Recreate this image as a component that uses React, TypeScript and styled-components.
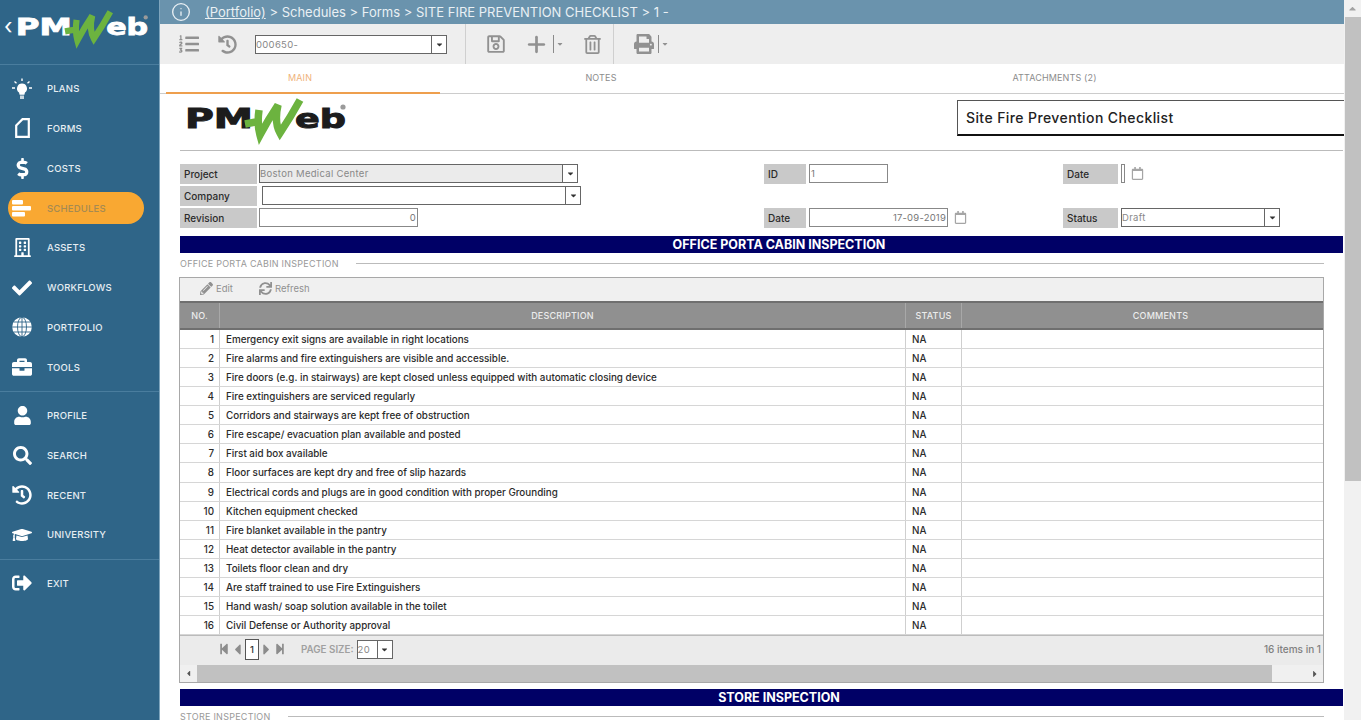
import React from "react";
import styled, { createGlobalStyle } from "styled-components";
import {
  FaBriefcase,
  FaCaretDown,
  FaCaretLeft,
  FaCaretRight,
  FaCaretUp,
  FaCheck,
  FaDollarSign,
  FaGraduationCap,
  FaHistory,
  FaListOl,
  FaPencilAlt,
  FaPrint,
  FaRegBuilding,
  FaRegCalendar,
  FaRegSave,
  FaRegTrashAlt,
  FaSearch,
  FaSignOutAlt,
  FaStepBackward,
  FaStepForward,
  FaSync,
  FaUser,
} from "react-icons/fa";
import { Info as InfoIcon, Plus } from "lucide-react";

const GlobalStyle = createGlobalStyle`
  html, body {
    margin: 0;
    height: 720px;
    overflow: hidden;
    background: #ffffff;
    font-family: "Inter", "Liberation Sans", sans-serif;
  }
  * {
    box-sizing: border-box;
  }
`;

function Logo({ width, ink }: { width: number; ink: string }) {
  return (
    <svg width={width} height={(width * 40) / 164} viewBox="0 0 164 40" overflow="visible">
      <g fontFamily="DejaVu Sans" fontWeight="700" fontSize="27" fill={ink} stroke={ink} strokeWidth="1">
        <text x="2" y="30" textLength="68" lengthAdjust="spacingAndGlyphs">
          PM
        </text>
        <text x="112" y="30" textLength="51" lengthAdjust="spacingAndGlyphs">
          eb
        </text>
      </g>
      <path
        d="M62 26 L73 24 M76 12 Q74 26 77 37 Q85 22 95 7 Q91 24 97 35 Q107 20 117 2"
        fill="none"
        stroke="#6cb33f"
        strokeWidth="7.5"
      />
      <circle cx="160" cy="9" r="2.6" fill="#9a9a9a" />
    </svg>
  );
}

function BulbIcon() {
  return (
    <svg width="22" height="22" viewBox="0 0 22 22" fill="#fff">
      <path d="M11 5.5a5 5 0 0 1 3 9l-.6 2.2H8.6L8 14.500a5 5 0 0 1 3-9z" />
      <rect x="9" y="17.500" width="4" height="3.500" fill="#c8d6df" />
      <path
        d="M11 .5v2.500M3.500 3.500l2 1.800M18.500 3.500l-2 1.800M1 10h3M18 10h3"
        stroke="#fff"
        strokeWidth="1.400"
      />
    </svg>
  );
}

function FormIcon() {
  return (
    <svg width="15" height="20" viewBox="0 0 15 20">
      <path d="M1.200 7.500 L7.500 1.200 H13.800 V18.800 H1.200 Z" fill="none" stroke="#fff" strokeWidth="2.200" />
    </svg>
  );
}

function BarsIcon() {
  return (
    <svg width="20" height="20" viewBox="0 0 20 20" fill="#fff">
      <rect x="0" y="2" width="11" height="4.500" rx="1" />
      <rect x="0" y="8" width="19" height="4.500" rx="1" />
      <rect x="0" y="14" width="13" height="4.500" rx="1" />
    </svg>
  );
}

function GlobeIcon() {
  return (
    <svg width="20" height="20" viewBox="0 0 20 20">
      <circle cx="10" cy="10" r="9.800" fill="#fff" />
      <g fill="none" stroke="#2f6588" strokeWidth="0.900">
        <ellipse cx="10" cy="10" rx="4.500" ry="9.800" />
        <path d="M10 0v20M0 10h20M1.500 5h17M1.500 15h17" />
      </g>
    </svg>
  );
}

const navTop = [
  { label: "PLANS", icon: <BulbIcon /> },
  { label: "FORMS", icon: <FormIcon /> },
  { label: "COSTS", icon: <FaDollarSign size={21} /> },
  { label: "SCHEDULES", icon: <BarsIcon />, active: true },
  { label: "ASSETS", icon: <FaRegBuilding size={19} /> },
  { label: "WORKFLOWS", icon: <FaCheck size={20} /> },
  { label: "PORTFOLIO", icon: <GlobeIcon /> },
  { label: "TOOLS", icon: <FaBriefcase size={20} /> },
];

const navMiddle = [
  { label: "PROFILE", icon: <FaUser size={19} /> },
  { label: "SEARCH", icon: <FaSearch size={19} /> },
  { label: "RECENT", icon: <FaHistory size={20} /> },
  { label: "UNIVERSITY", icon: <FaGraduationCap size={20} /> },
];

const navBottom = [{ label: "EXIT", icon: <FaSignOutAlt size={20} /> }];

const firstChecks = [
  "Emergency exit signs are available in right locations",
  "Fire alarms and fire extinguishers are visible and accessible.",
  "Fire doors (e.g. in stairways) are kept closed unless equipped with automatic closing device",
  "Fire extinguishers are serviced regularly",
  "Corridors and stairways are kept free of obstruction",
  "Fire escape/ evacuation plan available and posted",
  "First aid box available",
  "Floor surfaces are kept dry and free of slip hazards",
  "Electrical cords and plugs are in good condition with proper Grounding",
  "Kitchen equipment checked",
  "Fire blanket available in the pantry",
  "Heat detector available in the pantry",
  "Toilets floor clean and dry",
  "Are staff trained to use Fire Extinguishers",
  "Hand wash/ soap solution available in the toilet",
  "Civil Defense or Authority approval",
];

function NavGroup({ items }: { items: typeof navTop }) {
  return (
    <Group>
      {items.map((item) => (
        <NavItem key={item.label} $active={item.active}>
          <NavIcon>{item.icon}</NavIcon>
          <NavLabel $active={item.active}>{item.label}</NavLabel>
        </NavItem>
      ))}
    </Group>
  );
}

function Dropdown({ value, width, disabled }: { value: string; width: number; disabled?: boolean }) {
  return (
    <Select $width={width} $disabled={disabled}>
      <SelectValue>{value}</SelectValue>
      <SelectButton>
        <FaCaretDown size={9} />
      </SelectButton>
    </Select>
  );
}

export default function App() {
  return (
    <Page>
      <GlobalStyle />
      <Sidebar>
        <Brand>
          <BackMark>‹</BackMark>
          <Logo width={135} ink="#ffffff" />
        </Brand>
        <NavGroup items={navTop} />
        <NavGroup items={navMiddle} />
        <NavGroup items={navBottom} />
      </Sidebar>

      <Main>
        <TopBar>
          <InfoIcon size={20} strokeWidth={1.6} />
          <Crumbs>
            <u>(Portfolio)</u> &gt; Schedules &gt; Forms &gt; SITE FIRE PREVENTION CHECKLIST &gt; 1 -
          </Crumbs>
        </TopBar>

        <Toolbar>
          <ToolGroup $width={306}>
            <ToolIcon $left={19}>
              <FaListOl size={20} />
            </ToolIcon>
            <ToolIcon $left={19}>
              <FaHistory size={19} />
            </ToolIcon>
            <Spacer $width={18} />
            <Dropdown value="000650-" width={192} />
          </ToolGroup>
          <ToolGroup $width={148}>
            <ToolIcon $left={20}>
              <FaRegSave size={20} />
            </ToolIcon>
            <ToolIcon $left={18}>
              <Plus size={25} strokeWidth={2.6} />
            </ToolIcon>
            <SplitMark />
            <FaCaretDown size={8} />
            <ToolIcon $left={19}>
              <FaRegTrashAlt size={19} />
            </ToolIcon>
          </ToolGroup>
          <ToolGroup $width={100} $last>
            <ToolIcon $left={20}>
              <FaPrint size={20} />
            </ToolIcon>
            <SplitMark />
            <FaCaretDown size={8} />
          </ToolGroup>
        </Toolbar>

        <Tabs>
          <Tab $width={274} $offset={6} $active>
            MAIN
          </Tab>
          <Tab $width={322}>NOTES</Tab>
          <Tab $width={585}>ATTACHMENTS (2)</Tab>
        </Tabs>

        <Sheet>
          <FormHead>
            <Logo width={164} ink="#1c1c1c" />
            <FormTitle>Site Fire Prevention Checklist</FormTitle>
          </FormHead>

          <Fields>
            <Field>
              <FieldLabel $width={77}>Project</FieldLabel>
              <Dropdown value="Boston Medical Center" width={319} disabled />
            </Field>
            <Field $gap={3}>
              <FieldLabel $width={42}>ID</FieldLabel>
              <TextBox $width={79}>1</TextBox>
            </Field>
            <Field $gap={3}>
              <FieldLabel $width={55}>Date</FieldLabel>
              <TextBox $width={4} />
              <CalendarMark>
                <FaRegCalendar size={13} />
              </CalendarMark>
            </Field>

            <Field>
              <FieldLabel $width={77}>Company</FieldLabel>
              <Spacer $width={1} />
              <Dropdown value="" width={319} />
            </Field>
            <Field />
            <Field />

            <Field>
              <FieldLabel $width={77}>Revision</FieldLabel>
              <TextBox $width={159} $end>
                0
              </TextBox>
            </Field>
            <Field $gap={3}>
              <FieldLabel $width={42}>Date</FieldLabel>
              <TextBox $width={139} $end>
                17-09-2019
              </TextBox>
              <CalendarMark>
                <FaRegCalendar size={13} />
              </CalendarMark>
            </Field>
            <Field $gap={3}>
              <FieldLabel $width={55}>Status</FieldLabel>
              <Dropdown value="Draft" width={159} />
            </Field>
          </Fields>

          <Banner>OFFICE PORTA CABIN INSPECTION</Banner>
          <SectionTitle>OFFICE PORTA CABIN INSPECTION</SectionTitle>

          <GridBox>
            <GridTools>
              <GridAction>
                <FaPencilAlt size={13} />
                Edit
              </GridAction>
              <GridAction>
                <FaSync size={13} />
                Refresh
              </GridAction>
            </GridTools>
            <GridHead>
              <HeadCell>NO.</HeadCell>
              <HeadCell>DESCRIPTION</HeadCell>
              <HeadCell>STATUS</HeadCell>
              <HeadCell $inset={36}>COMMENTS</HeadCell>
            </GridHead>
            {firstChecks.map((text, index) => (
              <GridRow key={text}>
                <NumberCell>{index + 1}</NumberCell>
                <BodyCell>{text}</BodyCell>
                <BodyCell>NA</BodyCell>
                <BodyCell />
              </GridRow>
            ))}
            <Pager>
              <PagerArrows>
                <FaStepBackward size={12} />
                <PagerCaret>
                  <FaCaretLeft size={17} />
                </PagerCaret>
                <PageBox>1</PageBox>
                <PagerCaret>
                  <FaCaretRight size={17} />
                </PagerCaret>
                <FaStepForward size={12} />
              </PagerArrows>
              <PageSize>PAGE SIZE:</PageSize>
              <Dropdown value="20" width={36} />
              <PagerCount>16 items in 1</PagerCount>
            </Pager>
            <HScroll>
              <ScrollEnd>
                <FaCaretLeft size={9} />
              </ScrollEnd>
              <HThumb />
              <ScrollEnd>
                <FaCaretRight size={10} />
              </ScrollEnd>
            </HScroll>
          </GridBox>

          <Banner $gap={6}>STORE INSPECTION</Banner>
          <SectionTitle>STORE INSPECTION</SectionTitle>
        </Sheet>
      </Main>

      <VScroll>
        <VButton>
          <FaCaretUp size={11} />
        </VButton>
        <VThumb />
      </VScroll>
    </Page>
  );
}

const Page = styled.div`
  display: flex;
  width: 1361px;
  height: 720px;
  overflow: hidden;
`;

const Sidebar = styled.aside`
  width: 160px;
  flex: none;
  height: 720px;
  background: #2f6588;
  border-right: 1px solid #7fa5bd;
  color: #ffffff;
`;

const Brand = styled.div`
  position: relative;
  height: 65px;
  padding: 10px 0 0 14px;
  border-bottom: 1px solid #4a7d9e;
`;

const BackMark = styled.span`
  position: absolute;
  left: 4px;
  top: 13px;
  font-size: 22px;
  line-height: 26px;
  color: #ffffff;
`;

const Group = styled.div`
  display: flex;
  flex-direction: column;
  padding: 3.8px 0;
  border-bottom: 1px solid #4a7d9e;

  &:last-child {
    border-bottom: none;
  }
`;

const NavItem = styled.div<{ $active?: boolean }>`
  display: flex;
  align-items: center;
  height: 32px;
  margin: 3.9px 15px 3.9px 8px;
  border-radius: 16px;
  background: ${(p) => (p.$active ? "#f9a832" : "transparent")};
`;

const NavIcon = styled.span`
  display: flex;
  justify-content: center;
  align-items: center;
  width: 28px;
  flex: none;
`;

const NavLabel = styled.span<{ $active?: boolean }>`
  margin-left: 11px;
  font-size: 9.5px;
  font-weight: 500;
  letter-spacing: 0.2px;
  color: ${(p) => (p.$active ? "#a58a52" : "#e6edf2")};
`;

const Main = styled.main`
  width: 1184px;
  flex: none;
  height: 720px;
  overflow: hidden;
`;

const TopBar = styled.div`
  display: flex;
  align-items: center;
  gap: 14px;
  height: 24px;
  padding-left: 11px;
  background: #6a93ad;
  color: #e9f0f4;
`;

const Crumbs = styled.div`
  font-size: 13px;
  white-space: nowrap;
`;

const Toolbar = styled.div`
  display: flex;
  height: 40px;
  background: #eeeeee;
  color: #919191;
`;

const ToolGroup = styled.div<{ $width: number; $last?: boolean }>`
  display: flex;
  align-items: center;
  width: ${(p) => p.$width}px;
  border-right: ${(p) => (p.$last ? "none" : "1px solid #cfcfcf")};
`;

const ToolIcon = styled.span<{ $left: number }>`
  display: flex;
  margin-left: ${(p) => p.$left}px;
`;

const Spacer = styled.span<{ $width: number }>`
  width: ${(p) => p.$width}px;
  flex: none;
`;

const SplitMark = styled.span`
  width: 1px;
  height: 18px;
  margin: 0 2px 0 4px;
  background: #8a8a8a;
`;

const Select = styled.div<{ $width: number; $disabled?: boolean }>`
  display: flex;
  width: ${(p) => p.$width}px;
  height: 19px;
  border: 1px solid #666666;
  background: ${(p) => (p.$disabled ? "#ebebeb" : "#ffffff")};
  color: #888888;
`;

const SelectValue = styled.div`
  flex: 1;
  padding-left: 0;
  overflow: hidden;
  font-size: 9.5px;
  line-height: 17px;
  letter-spacing: 0.3px;
  white-space: nowrap;
`;

const SelectButton = styled.div`
  display: flex;
  align-items: center;
  justify-content: center;
  width: 15px;
  flex: none;
  border-left: 1px solid #666666;
  background: #ffffff;
  color: #333333;
`;

const Tabs = styled.div`
  display: flex;
  height: 30px;
  border-bottom: 1px solid #cccccc;
`;

const Tab = styled.div<{ $width: number; $offset?: number; $active?: boolean }>`
  display: flex;
  align-items: center;
  justify-content: center;
  flex: none;
  width: ${(p) => p.$width}px;
  height: ${(p) => (p.$active ? "30px" : "29px")};
  margin-left: ${(p) => p.$offset ?? 0}px;
  padding: 0 ${(p) => p.$offset ?? 0}px 2px 0;
  font-size: 9px;
  letter-spacing: 0.15px;
  color: ${(p) => (p.$active ? "#efb27a" : "#8c8c8c")};
  border-bottom: ${(p) => (p.$active ? "2px solid #ee9f4d" : "none")};
`;

const Sheet = styled.div`
  padding: 0 1px 0 20px;
`;

const FormHead = styled.div`
  display: flex;
  justify-content: space-between;
  height: 57px;
  padding: 4px 0 0 3px;
  border-bottom: 1px solid #bbbbbb;
`;

const FormTitle = styled.div`
  width: 387px;
  height: 36px;
  margin: 2px -1px 0 0;
  padding-left: 8px;
  border: 1px solid #555555;
  border-right: none;
  border-bottom: 2px solid #111111;
  font-size: 14px;
  font-weight: 500;
  line-height: 33px;
  letter-spacing: 0.4px;
  color: #222222;
`;

const Fields = styled.div`
  display: grid;
  grid-template-columns: 584px 299px 1fr;
  grid-auto-rows: 20px;
  row-gap: 2px;
  margin-top: 13px;
`;

const Field = styled.div<{ $gap?: number }>`
  display: flex;
  gap: ${(p) => p.$gap ?? 2}px;
`;

const FieldLabel = styled.div<{ $width: number }>`
  width: ${(p) => p.$width}px;
  flex: none;
  padding-left: 4px;
  background: #c9c9c9;
  font-size: 10px;
  font-weight: 500;
  line-height: 20px;
  color: #2b2b2b;
`;

const TextBox = styled.div<{ $width: number; $end?: boolean }>`
  width: ${(p) => p.$width}px;
  height: 19px;
  padding: 0 1px;
  border: 1px solid #888888;
  background: #ffffff;
  font-size: 9.5px;
  line-height: 17px;
  letter-spacing: 0.2px;
  text-align: ${(p) => (p.$end ? "right" : "left")};
  color: #777777;
`;

const CalendarMark = styled.span`
  display: flex;
  align-items: flex-start;
  padding: 3px 0 0 3px;
  color: #a5a5a5;
`;

const Banner = styled.div<{ $gap?: number }>`
  height: 17px;
  margin-top: ${(p) => p.$gap ?? 8}px;
  padding-left: 35px;
  background: #000066;
  font-size: 12.500px;
  font-weight: 700;
  line-height: 17px;
  text-align: center;
  color: #ffffff;
`;

const SectionTitle = styled.div`
  display: flex;
  align-items: center;
  gap: 17px;
  height: 20px;
  margin: 0 19px 4px 0;
  font-size: 9px;
  letter-spacing: 0.25px;
  color: #999999;

  &::after {
    content: "";
    flex: 1;
    height: 1px;
    background: #bbbbbb;
  }
`;

const GridBox = styled.div`
  width: 1145px;
  margin-left: -1px;
  border: 1px solid #a8a8a8;
  background: #ffffff;
`;

const GridTools = styled.div`
  display: flex;
  align-items: center;
  gap: 26px;
  height: 23px;
  padding: 0 0 2px 20px;
  background: #f0f0f0;
`;

const GridAction = styled.span`
  display: flex;
  align-items: center;
  gap: 3px;
  font-size: 9.5px;
  color: #909090;
`;

const GridHead = styled.div`
  display: grid;
  grid-template-columns: 39px 686px 56px 1fr;
  height: 29px;
  border-top: 2px solid #6f6f6f;
  border-bottom: 2px solid #6f6f6f;
  background: #909090;
`;

const HeadCell = styled.div<{ $inset?: number }>`
  padding-left: ${(p) => p.$inset ?? 0}px;
  border-left: 1px solid #a8a8a8;
  font-size: 9px;
  font-weight: 500;
  line-height: 25px;
  letter-spacing: 0.2px;
  text-align: center;
  color: #ececec;

  &:first-child {
    border-left: none;
  }
`;

const GridRow = styled.div`
  display: grid;
  grid-template-columns: 39px 686px 56px 1fr;
  height: 19.07px;
  border-bottom: 1px solid #d6d6d6;
`;

const BodyCell = styled.div`
  padding-left: 6px;
  border-left: 1px solid #cfcfcf;
  overflow: hidden;
  font-size: 9.850px;
  font-weight: 500;
  line-height: 18px;
  white-space: nowrap;
  color: #2b2b2b;
`;

const NumberCell = styled.div`
  padding-right: 5px;
  font-size: 9.850px;
  font-weight: 500;
  line-height: 18px;
  text-align: right;
  color: #2b2b2b;
`;

const Pager = styled.div`
  display: flex;
  align-items: center;
  height: 30px;
  padding: 0 2px 3px 38px;
  border-top: 1px solid #bbbbbb;
  background: #ebebeb;
`;

const PagerArrows = styled.div`
  display: flex;
  align-items: center;
  gap: 1px;
  color: #8c8c8c;
`;

const PagerCaret = styled.span`
  display: flex;
  margin: 0 -2px;
`;

const PageBox = styled.span`
  width: 14px;
  height: 21px;
  border: 1px solid #555555;
  background: #ffffff;
  font-size: 9.5px;
  font-weight: 500;
  line-height: 19px;
  text-align: center;
  color: #333333;
`;

const PageSize = styled.span`
  margin: 0 3px 0 15px;
  font-size: 9.800px;
  font-weight: 600;
  color: #a0a0a0;
`;

const PagerCount = styled.span`
  margin-left: auto;
  font-size: 10px;
  font-weight: 500;
  color: #808080;
`;

const HScroll = styled.div`
  display: flex;
  height: 17px;
  background: #f0f0f0;
`;

const ScrollEnd = styled.span`
  display: flex;
  align-items: center;
  justify-content: center;
  width: 17px;
  flex: none;
  color: #555555;
`;

const HThumb = styled.div`
  width: 1075px;
  background: #c1c1c1;
  margin-right: auto;
`;

const VScroll = styled.div`
  width: 17px;
  flex: none;
  height: 720px;
  background: #f1f1f1;
`;

const VButton = styled.div`
  display: flex;
  align-items: center;
  justify-content: center;
  height: 17px;
  color: #a3a3a3;
`;

const VThumb = styled.div`
  height: 464px;
  margin-left: 1px;
  background: #c1c1c1;
`;
